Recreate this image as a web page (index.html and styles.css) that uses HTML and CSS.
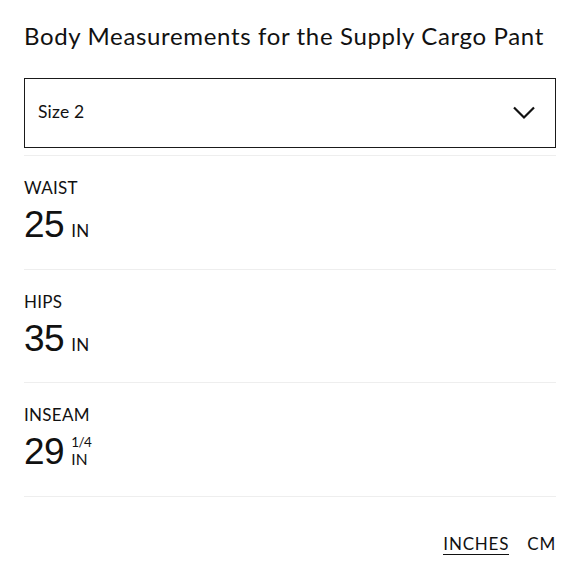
FILE: index.html
```html
<!DOCTYPE html>
<html>
<head>
<meta charset="utf-8">
<link rel="stylesheet" href="styles.css">
</head>
<body>
<div class="page">
  <h1 class="title">Body Measurements for the Supply Cargo Pant</h1>
  <div class="select">
    <span class="select-value">Size 2</span>
    <svg class="chevron" width="24" height="14" viewBox="0 0 24 14"><path d="M2 1.5 L12 11.5 L22 1.5" fill="none" stroke="#111" stroke-width="2.2"/></svg>
  </div>
  <ul class="list">
    <li class="item">
      <div class="label">WAIST</div>
      <div class="value"><span class="num">25</span><span class="unit">IN</span></div>
    </li>
    <li class="item">
      <div class="label">HIPS</div>
      <div class="value"><span class="num">35</span><span class="unit">IN</span></div>
    </li>
    <li class="item">
      <div class="label">INSEAM</div>
      <div class="value"><span class="num">29</span><span class="stack"><span class="frac">1/4</span><span class="unit2">IN</span></span></div>
    </li>
  </ul>
  <div class="units">
    <span class="unit-opt active">INCHES</span>
    <span class="unit-opt">CM</span>
  </div>
</div>
</body>
</html>
```
FILE: styles.css
```css
* { box-sizing: border-box; }
html, body { margin: 0; padding: 0; background: #fff; }
body { font-family: "Lato", "Liberation Sans", sans-serif; color: #111; }
.page { padding: 20px 24px 0 24px; width: 580px; }
.title { margin: 0; font-size: 24px; font-weight: 400; line-height: 32px; letter-spacing: 0.65px; }
.select {
  margin-top: 26px;
  height: 70px;
  border: 1.5px solid #1a1a1a;
  display: flex;
  align-items: center;
  justify-content: space-between;
  padding: 0 19px 0 13px;
}
.select-value { font-size: 17.5px; letter-spacing: 0.2px; margin-top: -3px; }
.chevron { display: block; }
.list { list-style: none; margin: 7px 0 0 0; padding: 0; border-top: 1px solid #eeeeee; }
.item { height: 113.5px; border-bottom: 1px solid #eeeeee; padding-top: 23px; }
.label { font-size: 17px; line-height: 18px; letter-spacing: 0.3px; }
.value { margin-top: 10px; display: flex; align-items: baseline; font-family: "Liberation Sans", sans-serif; }
.num { font-size: 37px; line-height: 36px; letter-spacing: -0.5px; }
.unit { font-family: "Lato", sans-serif; font-size: 17px; line-height: 16px; margin-left: 7px; letter-spacing: 0.3px; }
.stack { display: flex; flex-direction: column; margin-left: 7px; font-family: "Lato", sans-serif; align-self: flex-end; margin-bottom: 3px; }
.frac { font-size: 13.5px; line-height: 1.2; letter-spacing: -0.5px; }
.unit2 { font-size: 15.5px; line-height: 1.2; letter-spacing: 0.3px; }
.units { display: flex; justify-content: flex-end; gap: 18px; margin-top: 38px; font-size: 17px; letter-spacing: 0.8px; }
.unit-opt { line-height: 18px; }
.unit-opt.active { border-bottom: 1.5px solid #111; padding-bottom: 1px; }
```
